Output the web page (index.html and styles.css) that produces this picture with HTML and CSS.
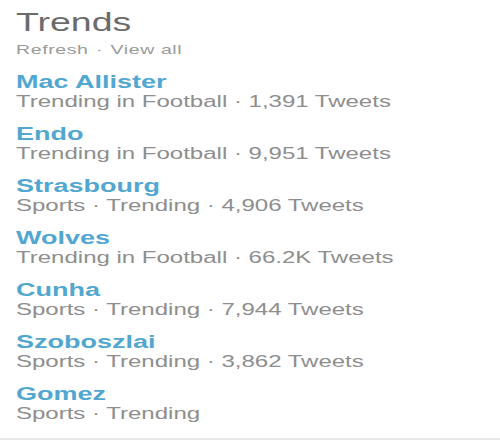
FILE: index.html
```html
<!DOCTYPE html>
<html>
<head>
<meta charset="utf-8">
<link rel="stylesheet" href="styles.css">
</head>
<body>
<div class="panel">
  <div class="content">
    <h1 class="title">Trends</h1>
    <div class="links"><span>Refresh</span><span class="dot">·</span><span>View all</span></div>
    <ul class="list">
      <li class="trend"><div class="name">Mac Allister</div><div class="meta">Trending in Football · 1,391 Tweets</div></li>
      <li class="trend"><div class="name">Endo</div><div class="meta">Trending in Football · 9,951 Tweets</div></li>
      <li class="trend"><div class="name">Strasbourg</div><div class="meta">Sports · Trending · 4,906 Tweets</div></li>
      <li class="trend"><div class="name">Wolves</div><div class="meta">Trending in Football · 66.2K Tweets</div></li>
      <li class="trend"><div class="name">Cunha</div><div class="meta">Sports · Trending · 7,944 Tweets</div></li>
      <li class="trend"><div class="name">Szoboszlai</div><div class="meta">Sports · Trending · 3,862 Tweets</div></li>
      <li class="trend"><div class="name">Gomez</div><div class="meta">Sports · Trending</div></li>
    </ul>
  </div>
</div>
</body>
</html>
```
FILE: styles.css
```css
html, body {
  margin: 0;
  padding: 0;
  background: #fff;
}
.panel {
  width: 500px;
  height: 440px;
  box-sizing: border-box;
  padding: 7px 16px 0 16px;
  border-bottom: 2px solid #e6e8ea;
  font-family: "Liberation Sans", Arial, sans-serif;
  overflow: hidden;
}
.content {
  transform: scaleX(1.5);
  transform-origin: left top;
}
.title {
  margin: 0;
  font-size: 25px;
  font-weight: normal;
  color: #6b6b6b;
  line-height: 30px;
}
.links {
  margin-top: 3px;
  font-size: 13px;
  letter-spacing: 0.4px;
  color: #9a9a9a;
  line-height: 20px;
  display: flex;
  gap: 5px;
}
.list {
  list-style: none;
  margin: 0;
  padding: 12px 0 0 0;
}
.trend {
  height: 52px;
}
.name {
  font-size: 18px;
  font-weight: bold;
  color: #52a7d0;
  line-height: 20px;
}
.meta {
  font-size: 16px;
  color: #8e8e8e;
  line-height: 20px;
}
```
